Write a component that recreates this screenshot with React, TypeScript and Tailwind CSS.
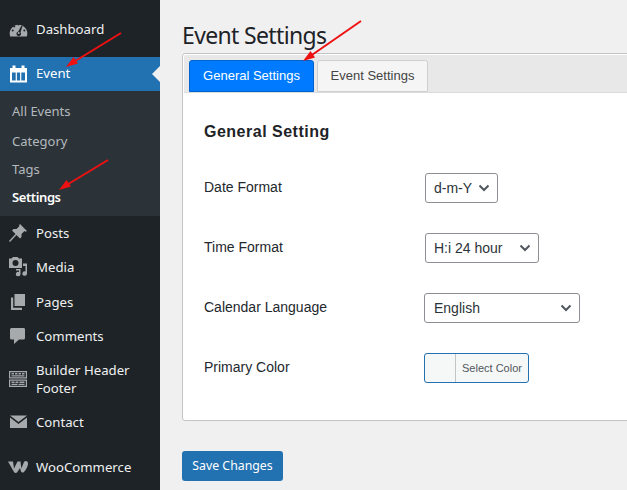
import { ReactNode } from "react";

const gray = "#a7aaad";

function Icon({ children, color = gray }: { children: ReactNode; color?: string }) {
  return (
    <svg width="20" height="20" viewBox="0 0 20 20" fill={color} className="shrink-0">
      {children}
    </svg>
  );
}

const DashboardIcon = (
  <Icon>
    <path d="M1.200 17.500a8.800 8.800 0 1 1 16.600 0z" />
    <g fill="#1d2327">
      <circle cx="9.500" cy="5.500" r="1" />
      <circle cx="5.200" cy="7.500" r="1" />
      <circle cx="3.700" cy="11.500" r="1" />
      <circle cx="15.300" cy="11.500" r="1" />
      <path d="M12.500 6.500l1 .5-2 6.500a2.200 2.200 0 1 1-2.400-.8z" />
    </g>
    <circle cx="9.700" cy="14" r="1" fill={gray} />
  </Icon>
);

const EventIcon = (
  <Icon color="#fff">
    <path fillRule="evenodd" d="M3.500 1.500h3V4h6V1.500h3V4H18v14.500H1V4h2.500zM3 8.500V16.500h3.700V8.500zM7.900 8.500V16.500h3.200V8.500zM12.300 8.500V16.500H16V8.500z" />
  </Icon>
);

const PostsIcon = (
  <Icon>
    <path d="M11 1l7 7-1.500.8-1-.8-3 3v3l-1.500 1.500-3.500-3.500L1 19l-1-1 6.500-7L3 7.500 4.500 6h3l3-3-.5-.8z" />
  </Icon>
);

const MediaIcon = (
  <Icon>
    <path fillRule="evenodd" d="M0 1.500h2.500L4 0h4.500L10 1.500h3v9.500H0zM6.500 3a3 3 0 1 0 0 6 3 3 0 0 0 0-6z" />
    <path d="M14 6.500h4v10a2.300 2.300 0 1 1-1.500-2.100V9h-2.500zM7 12h4.500v5a2.300 2.300 0 1 1-1.500-2.100v-1.400H7z" />
  </Icon>
);

const PagesIcon = (
  <Icon>
    <path d="M5.500 2H16v12H5.500z" />
    <path d="M2 5.500h2.200V15.800H13V18H2z" />
  </Icon>
);

const CommentsIcon = (
  <Icon>
    <path d="M2.500 2H15a1.500 1.500 0 0 1 1 1.500v8.500a1.500 1.500 0 0 1-1.500 1.500H10L5 18v-4.500H2.500A1.500 1.500 0 0 1 1 12V3.500A1.500 1.500 0 0 1 2.500 2z" />
  </Icon>
);

const BuilderIcon = (
  <Icon>
    <path fillRule="evenodd" d="M0 2h18v7.500H0zM1.200 3.200v5.100h15.600V3.200zM0 10.500h18V18H0zM1.200 11.700v5.100h15.600v-5.100z" />
    <path d="M2.500 4h2.500v1.400H2.500zM6 4h2.500v1.400H6zM9.500 4H12v1.400H9.500zM13 4h2.500v1.400H13zM2.500 6.300h13v1.200h-13zM2.500 12.500h3v1.400h-3zM6.500 12.500h3v1.400h-3zM10.500 12.500h5v1.400h-5zM2.500 14.800h6v1.200h-6zM9.500 14.800h6v1.200h-6z" />
  </Icon>
);

const ContactIcon = (
  <Icon>
    <path d="M1 3.500h17L9.500 10zM1 5.500L9.500 12 18 5.500V16H1z" />
  </Icon>
);

const WooIcon = (
  <svg width="20" height="12" viewBox="0 0 20 12" fill={gray} className="-ml-px shrink-0">
    <path d="M0 .5h5l1 7L9.500.5h3l.8 7L16 1c1-1.500 4-1.200 4 1.500 0 3-2.500 7-4 8.500-1 .8-2.500.8-3-.5L12 7l-3 4.500c-1 .8-2.500.6-3-.5z" />
  </svg>
);

function MenuItem({ icon, height, children }: { icon: ReactNode; height: string; children: ReactNode }) {
  return (
    <div className={`flex items-center pl-[9px] ${height} text-[#f0f0f1]`}>
      <span className="w-[27px]">{icon}</span>
      <span className="leading-[18px]">{children}</span>
    </div>
  );
}

function Sidebar() {
  return (
    <div className="flex h-full w-[160px] shrink-0 flex-col bg-[#1d2327] font-['Noto_Sans',sans-serif] text-[13.2px]">
      <div className="pt-[12px]" />
      <MenuItem icon={DashboardIcon} height="h-[34px]">Dashboard</MenuItem>
      <div className="h-[11px]" />
      <div className="relative flex h-[34px] items-center bg-[#2271b1] pl-[9px] text-white">
        <span className="w-[27px]">{EventIcon}</span>
        Event
        <div className="absolute right-0 top-[9px] border-y-[8px] border-r-[8px] border-y-transparent border-r-[#f0f0f1]" />
      </div>
      <div className="flex h-[125px] flex-col bg-[#2c3338] pl-[12px] pt-[7px] text-[13px] text-[#b4b9be]">
        <div className="flex h-[28px] items-center">All Events</div>
        <div className="mt-[2px] flex h-[28px] items-center">Category</div>
        <div className="flex h-[28px] items-center">Tags</div>
        <div className="flex h-[28px] items-center font-semibold tracking-[-0.4px] text-white">Settings</div>
      </div>
      <MenuItem icon={PostsIcon} height="h-[34px]">Posts</MenuItem>
      <MenuItem icon={MediaIcon} height="h-[34px]">Media</MenuItem>
      <MenuItem icon={PagesIcon} height="h-[35px]">Pages</MenuItem>
      <MenuItem icon={CommentsIcon} height="h-[34px]">Comments</MenuItem>
      <MenuItem icon={BuilderIcon} height="h-[52px]">Builder Header<br />Footer</MenuItem>
      <MenuItem icon={ContactIcon} height="h-[34px]">Contact</MenuItem>
      <div className="h-[11px]" />
      <MenuItem icon={WooIcon} height="h-[34px]">WooCommerce</MenuItem>
    </div>
  );
}

function Chevron() {
  return (
    <svg width="12" height="8" viewBox="0 0 12 8" fill="none" stroke="#50575e" strokeWidth="2">
      <path d="M1.500 1.500L6 6l4.500-4.500" />
    </svg>
  );
}

function Dropdown({ label, width }: { label: string; width: string }) {
  return (
    <div className={`flex h-[30px] items-center justify-between rounded-[3px] border border-[#8c8f94] bg-white pl-[8px] pr-[7px] text-[14px] text-[#2c3338] ${width}`}>
      <span>{label}</span>
      <Chevron />
    </div>
  );
}

function Row({ label, children }: { label: string; children: ReactNode }) {
  return (
    <div className="flex h-[60px] items-center">
      <div className="w-[221px] pb-[2px] text-[14px] text-[#23282d]">{label}</div>
      {children}
    </div>
  );
}

function Settings() {
  return (
    <div className="min-w-0 flex-1 pl-[22px] font-['Liberation_Sans',sans-serif]">
      <h1 className="h-[53px] pt-[19px] font-['Noto_Sans',sans-serif] text-[23px] leading-[32px] tracking-[-0.65px] text-[#1d2327]">Event Settings</h1>
      <div className="-mr-[10px] h-[368px] rounded-[3px] border border-[#c3c4c7] bg-white p-px">
        <div className="flex h-[38px] items-end gap-[3px] rounded-t-[2px] border-b border-[#dcdcde] bg-[#e8e8e8] pl-[5px]">
          <div className="flex h-[32px] w-[125px] items-center justify-center rounded-t-[3px] border border-[#0062cc] bg-[#007bff] text-[13px] text-white">General Settings</div>
          <div className="flex h-[32px] w-[111px] items-center justify-center rounded-t-[3px] border border-[#d0d0d0] bg-[#f5f5f5] text-[13px] text-[#444]">Event Settings</div>
        </div>
        <div className="pl-[20px]">
          <h2 className="pt-[30px] text-[16px] font-bold leading-[18px] tracking-[0.5px] text-[#1d2327]">General Setting</h2>
          <div className="mt-[17px] flex flex-col">
            <Row label="Date Format"><Dropdown label="d-m-Y" width="w-[73px]" /></Row>
            <Row label="Time Format"><Dropdown label="H:i 24 hour" width="w-[114px]" /></Row>
            <Row label="Calendar Language"><div className="-ml-px"><Dropdown label="English" width="w-[156px] pl-[9px]" /></div></Row>
            <Row label="Primary Color">
              <div className="-ml-px flex h-[30px] w-[105px] overflow-hidden rounded-[3px] border border-[#2271b1] bg-[#f6f7f7]">
                <div className="w-[31px] border-r border-[#c3c4c7]" />
                <div className="flex flex-1 items-center justify-center text-[11px] text-[#50575e]">Select Color</div>
              </div>
            </Row>
          </div>
        </div>
      </div>
      <div className="mt-[30px] flex h-[30px] w-[101px] items-center justify-center rounded-[3px] bg-[#2271b1] pt-px font-['Noto_Sans',sans-serif] text-[12.3px] text-white">Save Changes</div>
    </div>
  );
}

export default function App() {
  return (
    <div className="relative flex h-[490px] w-[627px] overflow-hidden bg-[#f0f0f1]">
      <Sidebar />
      <Settings />
      <svg width="627" height="490" viewBox="0 0 627 490" className="pointer-events-none absolute left-0 top-0">
        <g stroke="#ee1111" strokeWidth="2" fill="#ee1111">
          <path d="M121 33L72 63" fill="none" />
          <path d="M66 67l12-3.500-4.500-6.500z" stroke="none" />
          <path d="M108 160L65 186" fill="none" />
          <path d="M59 190l12-3.500-4.500-6.500z" stroke="none" />
          <path d="M361 21L309 57" fill="none" />
          <path d="M303 61l12-3.500-4.500-6.500z" stroke="none" />
        </g>
      </svg>
    </div>
  );
}
